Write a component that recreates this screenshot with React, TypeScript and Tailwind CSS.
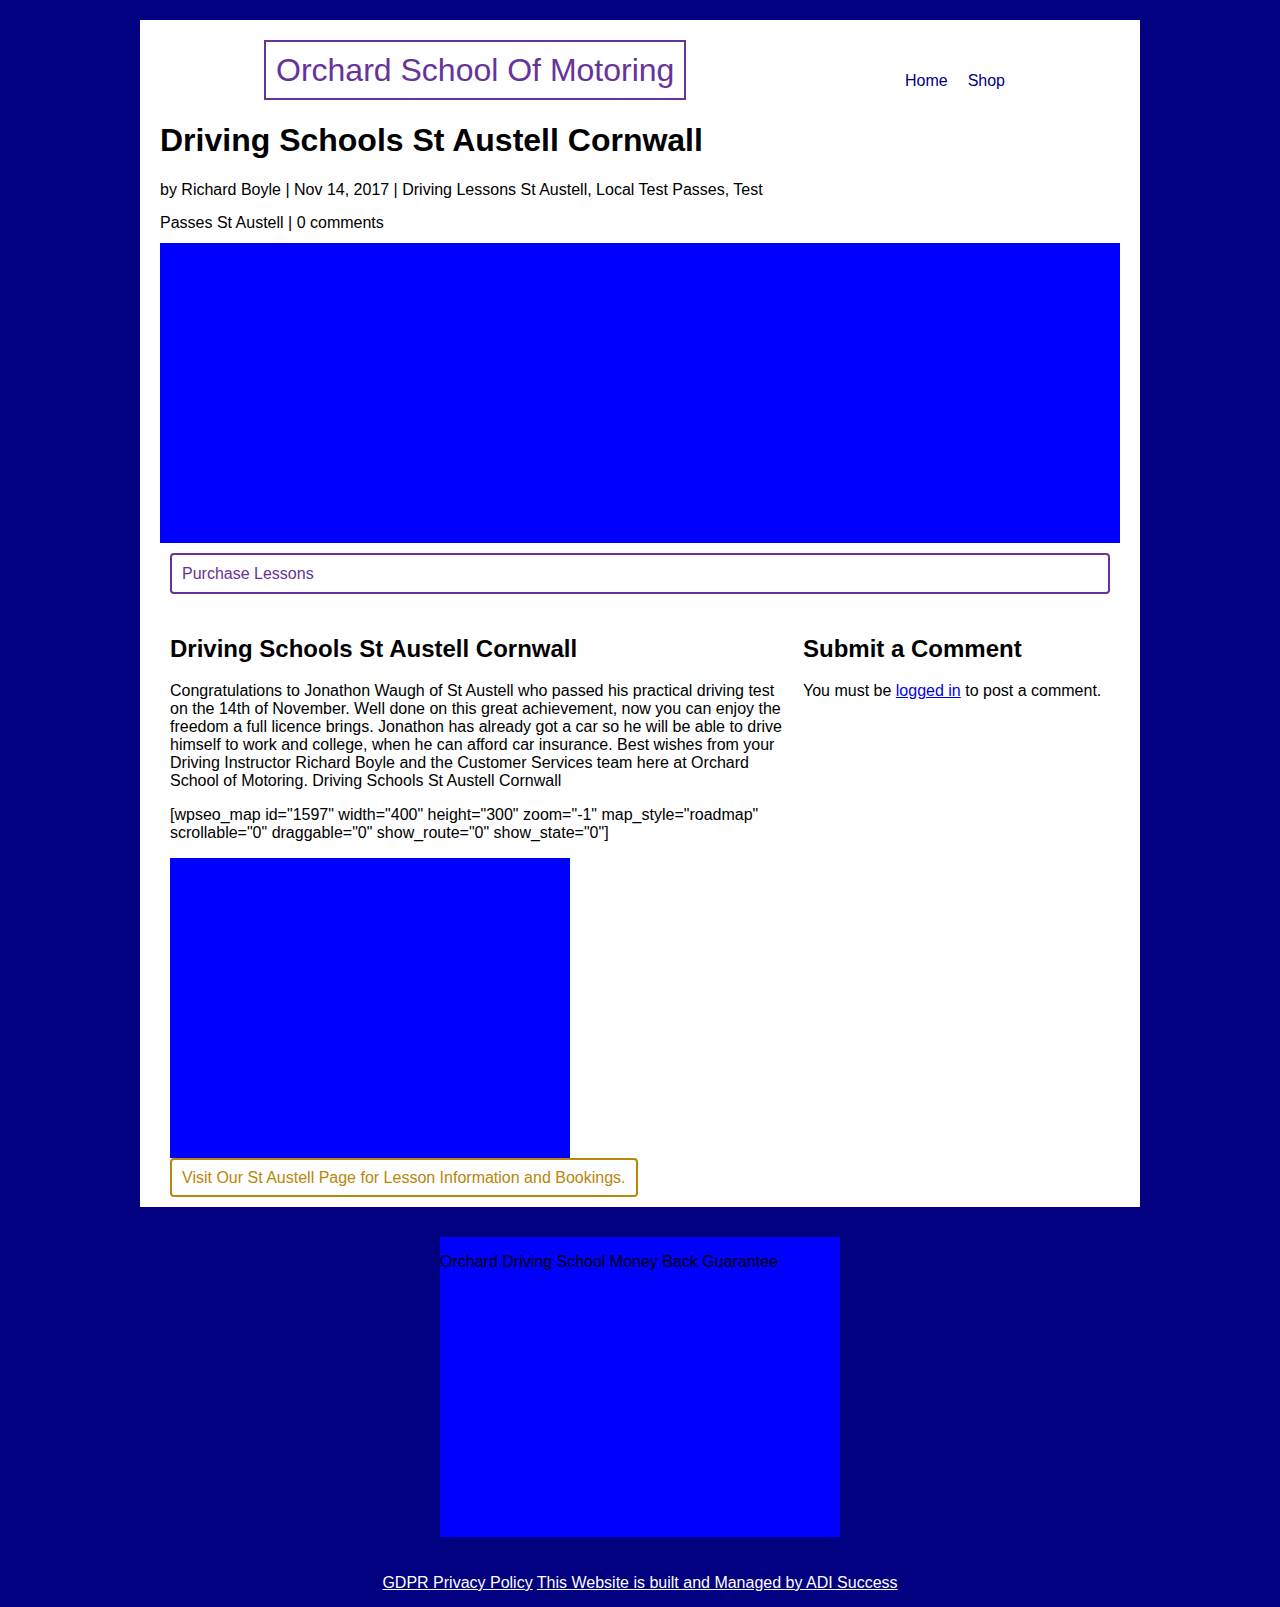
import React from "react";

export default function App() {
  const font = { fontFamily: '"Liberation Sans", Arial, sans-serif' };
  return (
    <div className="min-h-[1607px] w-full bg-[#000080] pt-[20px] text-black" style={font}>
      <div className="mx-auto w-[1000px] bg-white pt-[20px] pb-[10px]">
        {/* header */}
        <div className="flex items-start">
          <div className="ml-[124px] border-2 border-[#663399] px-[10px] py-[10px] text-[32px] leading-[36px] text-[#663399]">
            Orchard School Of Motoring
          </div>
          <nav className="ml-auto mr-[135px] mt-[32px] flex gap-[20px] text-[16px] leading-[18px] text-[#000080]">
            <a href="#">Home</a>
            <a href="#">Shop</a>
          </nav>
        </div>

        <div className="px-[20px]">
          <h1 className="mt-[22px] text-[32px] font-bold leading-[36px]">
            Driving Schools St Austell Cornwall
          </h1>
          <p className="mt-[15px] w-[620px] text-[16px] leading-[33px]">
            by Richard Boyle | Nov 14, 2017 | Driving Lessons St Austell, Local Test Passes, Test Passes St Austell | 0 comments
          </p>
          <div className="mt-[4px] h-[300px] w-full bg-[#0000ff]" />
        </div>

        <div className="px-[30px]">
          <div className="mt-[10px] rounded-[4px] border-2 border-[#663399] px-[10px] py-[9px] text-[16px] leading-[19px] text-[#663399]">
            Purchase Lessons
          </div>

          <div className="mt-[41px] flex gap-[13px]">
            <div className="w-[620px] shrink-0">
              <h2 className="text-[24px] font-bold leading-[28px]">
                Driving Schools St Austell Cornwall
              </h2>
              <p className="mt-[19px] text-[16px] leading-[18px]">
                Congratulations to Jonathon Waugh of St Austell who passed his practical driving test on the 14th of November. Well done on this great achievement, now you can enjoy the freedom a full licence brings. Jonathon has already got a car so he will be able to drive himself to work and college, when he can afford car insurance. Best wishes from your Driving Instructor Richard Boyle and the Customer Services team here at Orchard School of Motoring. Driving Schools St Austell Cornwall
              </p>
              <p className="mt-[16px] text-[16px] leading-[18px]">
                [wpseo_map id="1597" width="400" height="300" zoom="-1" map_style="roadmap" scrollable="0" draggable="0" show_route="0" show_state="0"]
              </p>
              <div className="mt-[16px] h-[300px] w-[400px] bg-[#0000ff]" />
              <div className="inline-block rounded-[4px] border-2 border-[#b8860b] px-[10px] py-[8px] text-[16px] leading-[19px] text-[#b8860b]">
                Visit Our St Austell Page for Lesson Information and Bookings.
              </div>
            </div>
            <div className="flex-1">
              <h3 className="text-[24px] font-bold leading-[28px]">Submit a Comment</h3>
              <p className="mt-[19px] text-[16px] leading-[18px]">
                You must be{" "}
                <a href="#" className="text-[#0000ee] underline">
                  logged in
                </a>{" "}
                to post a comment.
              </p>
            </div>
          </div>
        </div>
      </div>

      <div className="mx-auto mt-[30px] h-[300px] w-[400px] bg-[#0000ff] pt-[16px] text-[16px] leading-[18px] text-black">
        Orchard Driving School Money Back Guarantee
      </div>

      <div className="mt-[37px] text-center text-[16px] leading-[18px] text-white">
        <a href="#" className="underline">GDPR Privacy Policy</a>{" "}
        <a href="#" className="underline">This Website is built and Managed by ADI Success</a>
      </div>
    </div>
  );
}
